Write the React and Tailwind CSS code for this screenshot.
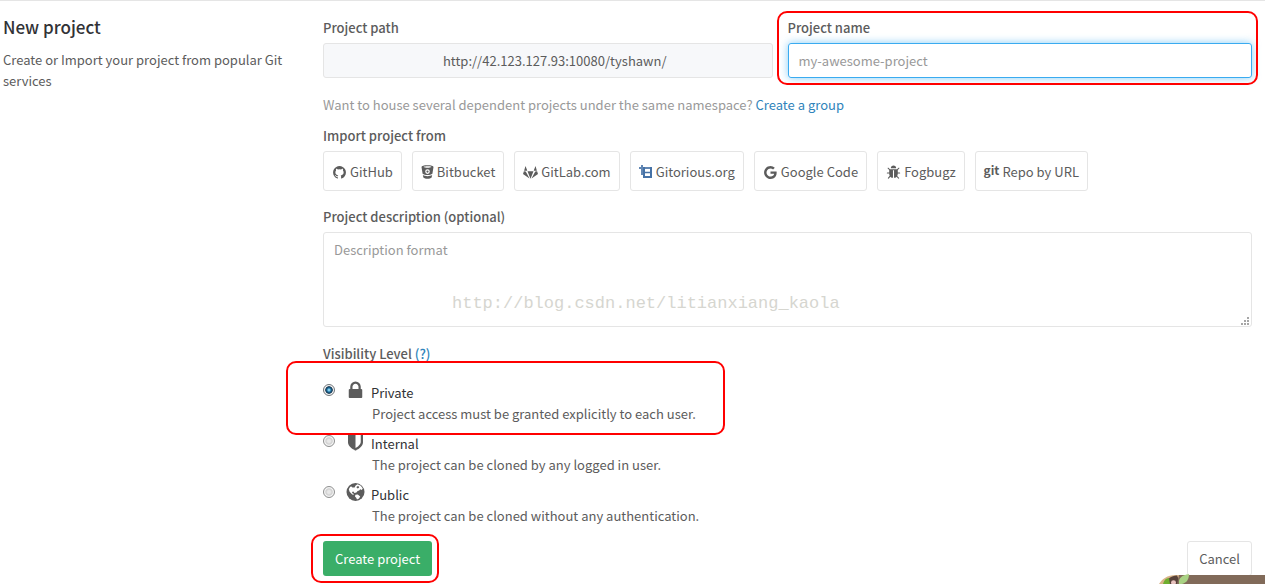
import React from "react";

const FONT = "font-['Noto_Sans_CJK_SC','Source_Sans_Pro',sans-serif]";

function Glyph({ className, children, viewBox = "0 0 1792 1792" }) {
  return (
    <svg className={`shrink-0 ${className}`} viewBox={viewBox} fill="currentColor" aria-hidden="true">
      {children}
    </svg>
  );
}

const GithubIcon = () => (
  <Glyph className="size-[15px]">
    <path d="M896 128q209 0 385.500 103t279.500 279.500 103 385.500q0 251-146.500 451.500t-378.500 277.500q-27 5-40-7t-13-30q0-3 .5-76.500t.5-134.500q0-97-52-142 57-6 102.500-18t94-39 81-66.500 53-105 20.500-150.500q0-119-79-206 37-91-8-204-28-9-81 11t-92 44l-38 24q-93-26-192-26t-192 26q-16-11-42.500-27t-83.500-38.500-85-13.500q-45 113-8 204-79 87-79 206 0 85 20.500 150t52.500 105 80.500 67 94 39 102.500 18q-39 36-49 103-21 10-45 15t-57 5-65.500-21.500-55.500-62.500q-19-32-48.500-52t-49.500-24l-20-3q-21 0-29 4.500t-5 11.500 9 14 13 12l7 5q22 10 43.500 38t31.500 51l10 23q13 38 44 61.500t67 30 69.500 7 55.500-3.500l23-4q0 38 .5 88.500t.5 54.500q0 18-13 30t-40 7q-232-77-378.500-277.500t-146.500-451.500q0-209 103-385.500t279.500-279.500 385.500-103z" />
  </Glyph>
);

const BitbucketIcon = () => (
  <Glyph className="h-[14px] w-[13px]" viewBox="0 0 24 28">
    <path
      fillRule="evenodd"
      d="M0 4C0 1.800 5 0.500 12 0.500S24 1.800 24 4L21.800 17.500C19.500 19.300 16 20.200 12 20.200S4.500 19.300 2.200 17.500ZM4 3.900C5.500 4.900 8.500 5.300 12 5.300S18.500 4.900 20 3.900C18.500 3 15.500 2.600 12 2.600S5.500 3 4 3.900ZM12 8.600A4.600 4.600 0 1 0 12 17.800A4.600 4.600 0 1 0 12 8.600ZM12 11A2.200 2.200 0 1 1 12 15.400A2.200 2.200 0 1 1 12 11Z"
    />
    <path d="M2.700 20C5 21.600 8.500 22.300 12 22.300S19 21.600 21.300 20L20.300 25C18.500 26.700 15.500 27.500 12 27.500S5.500 26.700 3.700 25Z" />
  </Glyph>
);

const GitlabIcon = () => (
  <Glyph className="h-[13px] w-[15px]" viewBox="0 0 30 26">
    <path d="M5 0L8.600 9.500H2.200ZM25 0L21.400 9.500H27.800ZM1.800 10.500L5.500 11L13 25L0 15.800ZM28.200 10.500L24.500 11L17 25L30 15.800ZM9 10.500H21L15 25.500Z" />
  </Glyph>
);

const GitoriousIcon = () => (
  <svg className="mb-[2px] h-[13px] w-[14px] shrink-0" viewBox="0 0 14 13" fill="none" stroke="#4672a6" aria-hidden="true">
    <path strokeWidth="2" d="M0 3H13M3 0V10" opacity="0.850" />
    <path strokeWidth="2" d="M5 2V12H12V2" />
    <path strokeWidth="1.500" d="M6 7.500H12" />
  </svg>
);

const GoogleIcon = () => (
  <Glyph className="size-[15px]">
    <path d="M896 786h725q12 67 12 128 0 217-91 387.500t-259.500 266.500-386.500 96q-157 0-299-60.500t-245-163.500-163.500-245-60.500-299 60.500-299 163.500-245 245-163.500 299-60.500q300 0 515 201l-209 201q-123-119-306-119-129 0-238.500 65t-173.500 176.500-64 243.500 64 243.500 173.500 176.500 238.500 65q87 0 160-24t120-60 82-82 51.500-87 22.500-78h-436v-264z" />
  </Glyph>
);

const BugIcon = () => (
  <Glyph className="size-[15px]">
    <path d="M1696 960q0 26-19 45t-45 19h-224q0 171-67 290l208 209q19 19 19 45t-19 45q-18 19-45 19t-45-19l-198-197q-5 5-15 13t-42 28.500-65 36.500-82 29-97 13v-896h-128v896q-51 0-101.500-13.500t-87-33-66-39-43.500-32.500l-15-14-183 207q-20 21-48 21-24 0-43-16-19-18-20.500-44.500t15.500-46.500l202-227q-58-114-58-274h-224q-26 0-45-19t-19-45 19-45 45-19h224v-294l-173-173q-19-19-19-45t19-45 45-19 45 19l173 173h844l173-173q19-19 45-19t45 19 19 45-19 45l-173 173v294h224q26 0 45 19t19 45zm-480-576h-640q0-133 93.500-226.500t226.500-93.500 226.500 93.500 93.500 226.500z" />
  </Glyph>
);

const GitIcon = () => (
  <span className="mb-1 text-xs leading-4 font-bold" aria-hidden="true">
    git
  </span>
);

const LockIcon = () => (
  <Glyph className="size-[21px]">
    <path d="M640 768h512v-192q0-106-75-181t-181-75-181 75-75 181v192zm832 96v576q0 40-28 68t-68 28h-960q-40 0-68-28t-28-68v-576q0-40 28-68t68-28h32v-192q0-184 132-316t316-132 316 132 132 316v192h32q40 0 68 28t28 68z" />
  </Glyph>
);

const ShieldIcon = () => (
  <Glyph className="size-[21px]">
    <path d="M1344 960v-640h-448v1137q119-63 213-137 235-184 235-360zm192-768v768q0 86-33.500 170.500t-83 150-118 127.500-126.500 103-121 77.500-89.500 49.500-42.500 20q-12 6-26 6t-26-6q-16-7-42.500-20t-89.500-49.500-121-77.500-126.500-103-118-127.500-83-150-33.500-170.500v-768q0-26 19-45t45-19h1152q26 0 45 19t19 45z" />
  </Glyph>
);

const GlobeIcon = () => (
  <Glyph className="size-[21px]" viewBox="0 0 21 21">
    <circle cx="10.500" cy="10" r="9" />
    <path
      fill="#fff"
      d="M10.600 3.600L12.500 2.300L15.800 3.800L17.800 6.600L16.800 8L15.300 7.200L14.200 8.600L12.600 9L11.400 10.400L9.400 11L8.400 9.600L7 10L7.400 11.200L8.600 11.800L8.800 12.800L7.200 12.400L4.600 9.800L3.800 7.200L5.200 4.800L6.400 4.400L7.400 5.600L9.600 5.600ZM10.400 12.800L12.800 12.600L15.200 14.400L14 16.400L12 17.600L11.200 15.800L10 14.400Z"
    />
    <path d="M11.800 4.400L13.400 4L14.200 5.400L12.800 6.400L11.600 5.800Z" />
  </Glyph>
);

const IMPORTERS = [
  { name: "GitHub", Icon: GithubIcon },
  { name: "Bitbucket", Icon: BitbucketIcon },
  { name: "GitLab.com", Icon: GitlabIcon },
  { name: "Gitorious.org", Icon: GitoriousIcon },
  { name: "Google Code", Icon: GoogleIcon },
  { name: "Fogbugz", Icon: BugIcon },
  { name: "Repo by URL", Icon: GitIcon },
];

const LEVELS = [
  { id: "private", name: "Private", Icon: LockIcon, text: "Project access must be granted explicitly to each user." },
  { id: "internal", name: "Internal", Icon: ShieldIcon, text: "The project can be cloned by any logged in user." },
  { id: "public", name: "Public", Icon: GlobeIcon, text: "The project can be cloned without any authentication." },
];

function Highlight({ className }) {
  return (
    <div aria-hidden="true" className={`pointer-events-none absolute z-10 rounded-[10px] border-2 border-[#f00] ${className}`} />
  );
}

const LABEL = "mb-[5px] block leading-5 font-medium";

function Level({ level }) {
  const { id, name, Icon, text } = level;
  return (
    <div className="flex items-start pb-[7px]">
      <input
        type="radio"
        name="visibility"
        id={id}
        aria-describedby={`${id}-text`}
        defaultChecked={id === "private"}
        className="mt-1 size-3 shrink-0 appearance-none rounded-full border border-[#8e8f8f] bg-[radial-gradient(circle,#e8e8e8_0_20%,#cfcfcf_45%,#f4f4f4_60%)] checked:border-[#6f7478] checked:bg-[radial-gradient(circle_at_50%_50%,#8fd8f5_0_8%,#1b6a99_30%,#12334d_48%,#f4f4f4_58%)]"
      />
      <label htmlFor={id} className="ml-[10px] shrink-0">
        <Icon />
      </label>
      <div className="mt-[2px] ml-[5px] leading-[21px]">
        <label htmlFor={id} className="block text-[#313236]">
          {name}
        </label>
        <p id={`${id}-text`} className="pl-px">
          {text}
        </p>
      </div>
    </div>
  );
}

function ResizeGrip() {
  return (
    <svg className="pointer-events-none absolute right-[3px] bottom-[2px] size-2" viewBox="0 0 8 8" fill="#a6a6a6" aria-hidden="true">
      <path d="M6 0h2v2h-2zM3 3h2v2h-2zM6 3h2v2h-2zM0 6h2v2h-2zM3 6h2v2h-2zM6 6h2v2h-2z" />
    </svg>
  );
}

function Mascot() {
  return (
    <svg className="absolute right-0 bottom-0 h-[11px] w-[106px]" viewBox="0 0 106 11" aria-hidden="true">
      <path d="M0 11C3 6 8 2 17 2H106V11Z" fill="#d9b48a" />
      <path d="M5 11C8 6 12 3 18 2.500L22 11Z" fill="#57423a" />
      <path d="M20 2H106V11H18Z" fill="#816a59" />
      <path d="M4 11C5 7 7 5 10 5L11 11Z" fill="#6fae2e" />
      <ellipse cx="14.500" cy="9.500" rx="2.500" ry="2.200" fill="#e9c3c0" />
      <path d="M20 11C19 5 23 2 30 1C30 7 27 10 23 11Z" fill="#a9d284" />
    </svg>
  );
}

export default function App() {
  return (
    <div
      className={`relative flex items-start gap-[30px] overflow-hidden border-t border-[#e5e5e5] bg-white pr-[13px] pb-2 pl-[3px] text-[13px] text-[#5c5c5c] ${FONT}`}
    >
      <aside className="w-[290px] shrink-0 pt-[14px]">
        <h4 className="text-[17px] leading-6 font-medium text-[#313236]">New project</h4>
        <p className="mt-[10px] leading-[21px]">Create or Import your project from popular Git services</p>
      </aside>

      <form className="min-w-0 flex-1 pt-[17px]" onSubmit={(e) => e.preventDefault()}>
        <div className="grid grid-cols-2">
          <div className="pr-[15px]">
            <span className={LABEL}>Project path</span>
            <div className="h-[35px] rounded-[3px] border border-[#e5e5e5] bg-[#f7f8fa] pl-[14px] text-center leading-[33px]">
              http://42.123.127.93:10080/tyshawn/
            </div>
          </div>
          <div className="relative">
            <Highlight className="-top-[7px] -right-[6px] -bottom-[7px] -left-[11px]" />
            <label htmlFor="project-name" className={LABEL}>
              Project name
            </label>
            <input
              id="project-name"
              type="text"
              placeholder="my-awesome-project"
              className="block h-[35px] w-full rounded-[3px] border border-[#3aabf0] px-[10px] shadow-[0_0_8px_rgba(58,171,240,0.6)] outline-none placeholder:text-[#999]"
            />
          </div>
        </div>

        <p className="mt-[17px] leading-5 text-[#999]">
          Want to house several dependent projects under the same namespace?{" "}
          <a href="#group" className="text-[#3084bb]">
            Create a group
          </a>
        </p>

        <div className="mt-[11px]">
          <span className={LABEL}>Import project from</span>
          <div className="flex flex-wrap gap-[10px]">
            {IMPORTERS.map(({ name, Icon }) => (
              <a
                key={name}
                href="#import"
                className="flex h-10 items-center gap-[3px] rounded-[3px] border border-[#e5e5e5] px-2 pt-[2px]"
              >
                <Icon />
                {name}
              </a>
            ))}
          </div>
        </div>

        <div className="relative mt-4">
          <label htmlFor="description" className={LABEL}>
            Project description (optional)
          </label>
          <textarea
            id="description"
            placeholder="Description format"
            className="block h-[95px] w-full rounded-[3px] border border-[#e5e5e5] px-[10px] py-[7px] leading-5 outline-none placeholder:text-[#999] [&::-webkit-resizer]:bg-transparent"
          />
          <ResizeGrip />
          <span className="pointer-events-none absolute top-[87px] left-[129px] font-['Liberation_Mono',monospace] text-[17px] leading-5 text-[#d6d6d0]">
            http://blog.csdn.net/litianxiang_kaola
          </span>
        </div>

        <fieldset className="mt-[17px]">
          <legend className="leading-5 font-medium">
            Visibility Level{" "}
            <a href="#help" className="text-[#3084bb]">
              (?)
            </a>
          </legend>
          <div className="relative pt-4">
            <Highlight className="-top-[3px] -left-[37px] h-[74px] w-[439px] shadow-[inset_0_-3px_0_#fff]" />
            {LEVELS.map((level) => (
              <Level key={level.id} level={level} />
            ))}
          </div>
        </fieldset>

        <div className="mt-2 flex justify-between">
          <div className="relative">
            <Highlight className="-top-[7px] -right-[7px] -bottom-[7px] -left-3" />
            <button type="submit" className="h-[35px] rounded-[3px] bg-[#3aae68] px-3 text-white">
              Create project
            </button>
          </div>
          <a href="#cancel" className="h-[35px] rounded-[3px] border border-[#e5e5e5] px-[11px] leading-[33px]">
            Cancel
          </a>
        </div>
      </form>
      <Mascot />
    </div>
  );
}
